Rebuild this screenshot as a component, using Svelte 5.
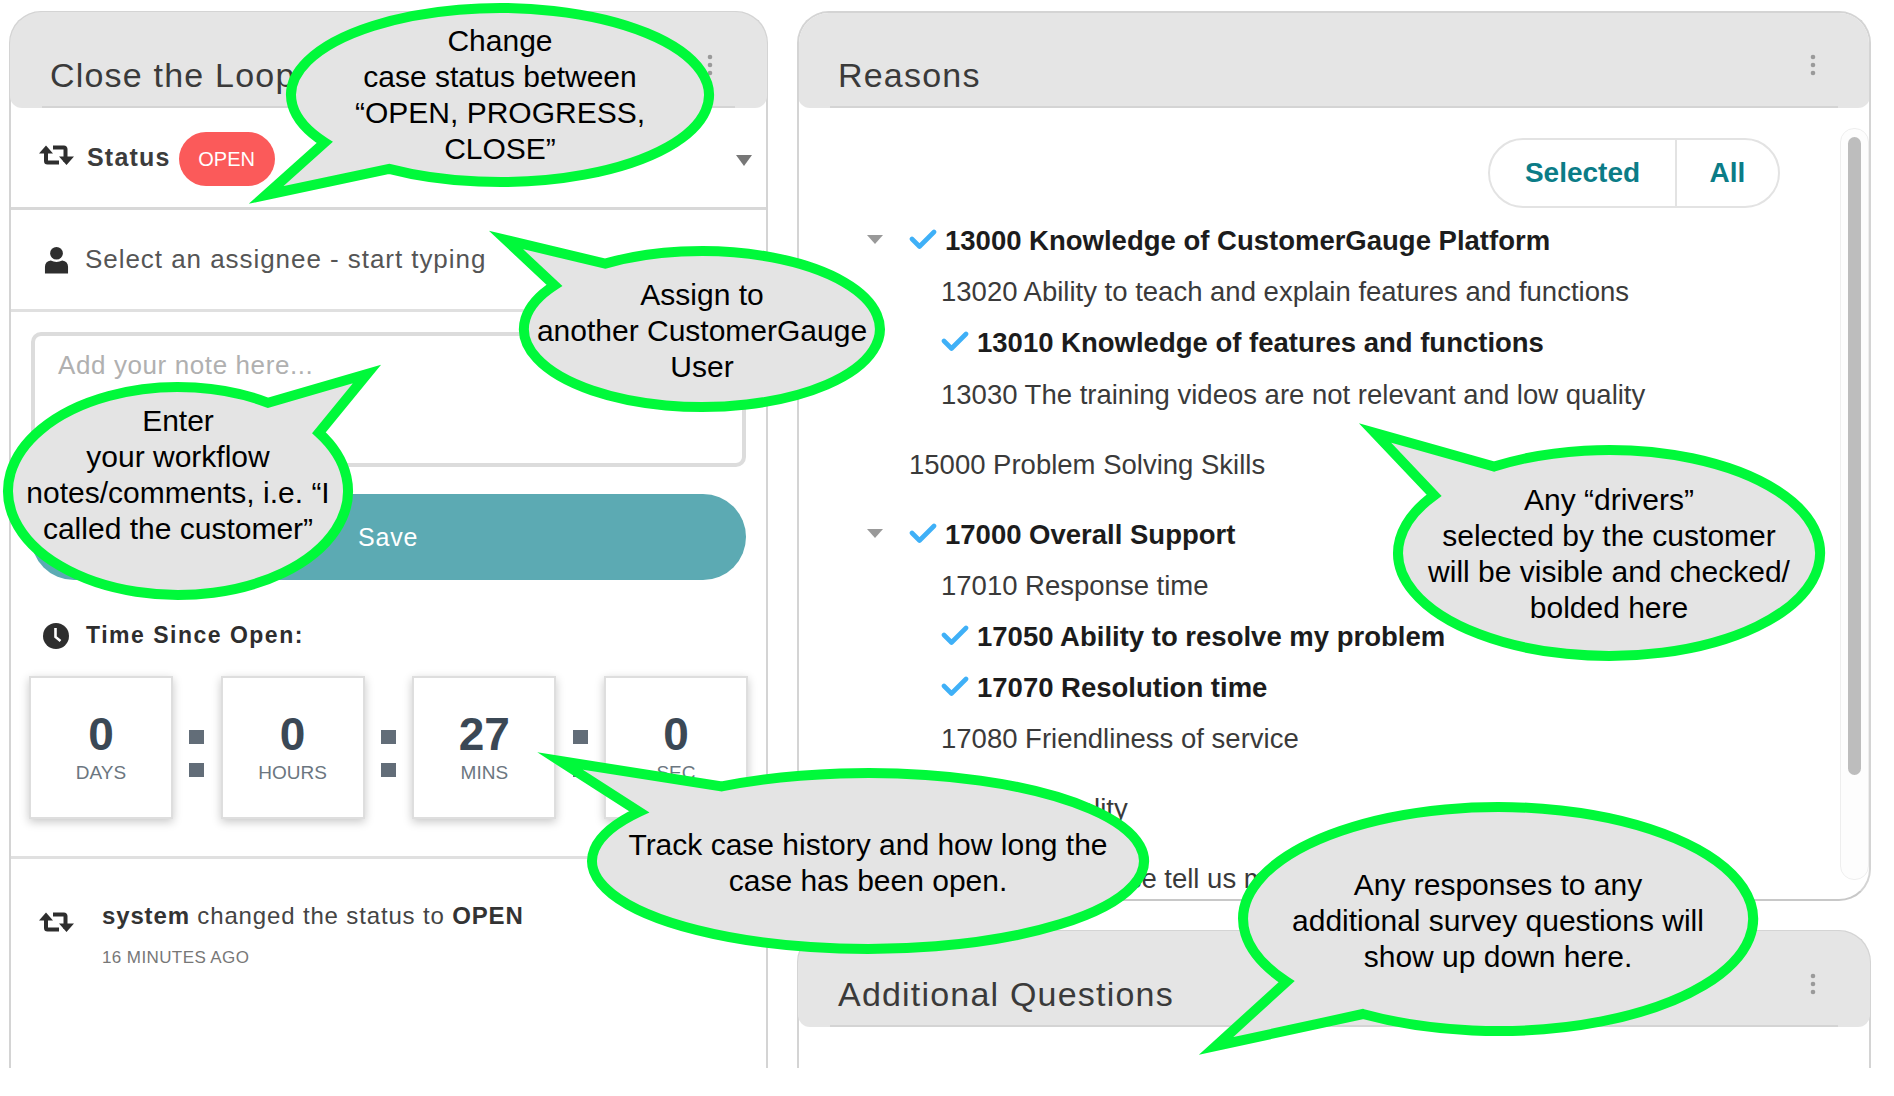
<script>
  const timers = [
    { value: 0, label: 'DAYS' },
    { value: 0, label: 'HOURS' },
    { value: 27, label: 'MINS' },
    { value: 0, label: 'SEC' }
  ];

  const reasons = [
    { text: '13000 Knowledge of CustomerGauge Platform', level: 0, on: true, open: true },
    { text: '13020 Ability to teach and explain features and functions', level: 1 },
    { text: '13010 Knowledge of features and functions', level: 1, on: true },
    { text: '13030 The training videos are not relevant and low quality', level: 1 },
    { text: '15000 Problem Solving Skills', level: 0, gap: true },
    { text: '17000 Overall Support', level: 0, on: true, open: true, gap: true },
    { text: '17010 Response time', level: 1 },
    { text: '17050 Ability to resolve my problem', level: 1, on: true },
    { text: '17070 Resolution time', level: 1, on: true },
    { text: '17080 Friendliness of service', level: 1 },
    { text: '18000 Site quality', level: 0, gap: true },
    { text: '19000 Other, please tell us more', level: 0, gap: true }
  ];

  // a1/a2 = where the tail leaves the ellipse (degrees), tip = point of the tail
  const bubbles = [
    { cx: 500, cy: 95, rx: 209, ry: 87, a1: 147, a2: 122, tip: [266, 195], y: 51,
      lines: ['Change', 'case status between', '“OPEN, PROGRESS,', 'CLOSE”'] },
    { cx: 702, cy: 329, rx: 178, ry: 78, a1: 237, a2: 214, tip: [506, 240], y: 305,
      lines: ['Assign to', 'another CustomerGauge', 'User'] },
    { cx: 178, cy: 491, rx: 170, ry: 104, a1: -58, a2: -34, tip: [367, 374], y: 431,
      lines: ['Enter', 'your workflow', 'notes/comments, i.e. “I', 'called the customer”'] },
    { cx: 868, cy: 861, rx: 276, ry: 88, a1: 238, a2: 214, tip: [560, 761], y: 855,
      lines: ['Track case history and how long the', 'case has been open.'] },
    { cx: 1609, cy: 553, rx: 211, ry: 103, a1: 237, a2: 214, tip: [1375, 433], y: 510,
      lines: ['Any “drivers”', 'selected by the customer', 'will be visible and checked/', 'bolded here'] },
    { cx: 1498, cy: 919, rx: 255, ry: 112, a1: 146, a2: 122, tip: [1216, 1046], y: 895,
      lines: ['Any responses to any', 'additional survey questions will', 'show up down here.'] }
  ];

  function point(b, deg) {
    const r = (deg * Math.PI) / 180;
    return `${(b.cx + b.rx * Math.cos(r)).toFixed(1)} ${(b.cy + b.ry * Math.sin(r)).toFixed(1)}`;
  }

  function bubblePath(b) {
    const clockwise = b.a1 > b.a2 ? 1 : 0;
    return `M${point(b, b.a1)} A${b.rx} ${b.ry} 0 1 ${clockwise} ${point(b, b.a2)} L${b.tip[0]} ${b.tip[1]} Z`;
  }
</script>

{#snippet retweet()}
  <svg class="icon retweet" viewBox="0 0 35 22" aria-hidden="true">
    <path d="M7 4 V17 a1.5 1.5 0 0 0 1.5 1.5 H20 M26.5 18 V5 a1.5 1.5 0 0 0 -1.5 -1.5 H14" fill="none" stroke="currentColor" stroke-width="4" />
    <path d="M0 9.5 L7 1.5 L14 9.5 Z M20 12.5 L27.5 21 L35 12.5 Z" fill="currentColor" />
  </svg>
{/snippet}

{#snippet dots()}
  <svg class="dots" viewBox="0 0 6 22" aria-hidden="true">
    <circle cx="3" cy="3" r="2.3" /><circle cx="3" cy="11" r="2.3" /><circle cx="3" cy="19" r="2.3" />
  </svg>
{/snippet}

{#snippet check()}
  <svg class="check" viewBox="0 0 28 22" aria-hidden="true">
    <path d="M3 11 L10.5 18.5 L25 4" fill="none" stroke="#3fb0f7" stroke-width="4.6" stroke-linejoin="round" stroke-linecap="round" />
  </svg>
{/snippet}

<div class="page">
  <section class="panel left">
    <header class="panel-head">
      <h2>Close the Loop</h2>
      {@render dots()}
    </header>

    <div class="status-row">
      {@render retweet()}
      <strong>Status</strong>
      <span class="badge">OPEN</span>
      <span class="caret"></span>
    </div>

    <div class="assignee-row">
      <svg class="icon user" viewBox="0 0 26 28" aria-hidden="true">
        <circle cx="13" cy="7" r="6.6" fill="currentColor" />
        <path d="M1 28 V21 Q1 15.5 7 14.5 Q13 17.5 19 14.5 Q25 15.5 25 21 V28 Z" fill="currentColor" />
      </svg>
      <span>Select an assignee - start typing</span>
    </div>

    <div class="note-area">
      <div class="note">Add your note here...</div>
      <button class="save">Save</button>

      <div class="since">
        <svg class="icon clock" viewBox="0 0 26 26" aria-hidden="true">
          <circle cx="13" cy="13" r="13" fill="currentColor" />
          <path d="M12.5 5 V14 L17.5 18" fill="none" stroke="#fff" stroke-width="2.6" />
        </svg>
        <strong>Time Since Open:</strong>
      </div>

      <div class="timers">
        {#each timers as t, i}
          {#if i > 0}
            <div class="colon"><i></i><i></i></div>
          {/if}
          <div class="timer">
            <b>{t.value}</b>
            <span>{t.label}</span>
          </div>
        {/each}
      </div>
    </div>

    <div class="history">
      {@render retweet()}
      <div>
        <p><b>system</b> changed the status to <b>OPEN</b></p>
        <small>16 MINUTES AGO</small>
      </div>
    </div>
  </section>

  <div class="right">
    <section class="panel reasons-panel">
      <header class="panel-head">
        <h2>Reasons</h2>
        {@render dots()}
      </header>
      <div class="reasons-body">
        <div class="scroll"><div class="thumb"></div></div>
        <div class="toggle">
          <span class="sel">Selected</span>
          <span class="all">All</span>
        </div>
        <ul>
          {#each reasons as r}
            <li class:child={r.level === 1} class:on={r.on} class:gap={r.gap}>
              {#if r.open}<span class="tree-caret"></span>{/if}
              {#if r.on}{@render check()}{/if}
              <span>{r.text}</span>
            </li>
          {/each}
        </ul>
      </div>
    </section>

    <section class="panel extra-panel">
      <header class="panel-head">
        <h2>Additional Questions</h2>
        {@render dots()}
      </header>
    </section>
  </div>

  <svg class="callouts" viewBox="0 0 1894 1096" aria-hidden="true">
    {#each bubbles as b}
      <path class="bubble" d={bubblePath(b)} />
      {#each b.lines as line, i}
        <text x={b.cx} y={b.y + i * 36}>{line}</text>
      {/each}
    {/each}
  </svg>
</div>

<style>
  :global(body) {
    background: #fff;
  }

  .page {
    position: relative;
    box-sizing: border-box;
    width: 1894px;
    height: 1068px;
    padding: 11px 23px 0 9px;
    display: flex;
    gap: 29px;
    overflow: hidden;
    font-family: "Liberation Sans", Arial, sans-serif;
    color: #333;
  }

  .panel {
    box-sizing: border-box;
    border: 2px solid #d4d4d4;
    border-bottom: none;
    border-radius: 32px 32px 0 0;
  }

  .left {
    width: 759px;
    height: 1057px;
  }

  .right {
    flex: 1;
    display: flex;
    flex-direction: column;
    gap: 29px;
  }

  .panel-head {
    box-sizing: border-box;
    position: relative;
    height: 96px;
    margin: -1px -1px 0;
    padding: 39px 37px 0 40px;
    display: flex;
    justify-content: space-between;
    background: #e5e5e5;
    border-radius: 32px 32px 12px 12px;
  }

  .panel-head::after {
    content: "";
    position: absolute;
    left: 32px;
    right: 32px;
    bottom: 0;
    height: 2px;
    background: #d4d4d4;
  }

  h2 {
    margin: 4px 0 0;
    font-size: 34px;
    font-weight: 400;
    letter-spacing: 1.2px;
    line-height: 40px;
    color: #3a3a3a;
  }

  .dots {
    width: 6px;
    height: 22px;
    margin: 3px 17px 0 0;
    fill: #9a9a9a;
  }

  .icon {
    flex: none;
    color: #2e2e2e;
  }

  .retweet {
    width: 35px;
    height: 22px;
  }

  .status-row {
    position: relative;
    box-sizing: border-box;
    height: 102px;
    padding: 0 0 0 28px;
    display: flex;
    align-items: center;
    border-bottom: 3px solid #d8d8d8;
    font-size: 25px;
  }

  .status-row .retweet {
    margin-top: -6px;
  }

  .status-row strong {
    margin: 0 8px 0 13px;
    letter-spacing: 1.2px;
    color: #3c3c3c;
  }

  .badge {
    box-sizing: border-box;
    width: 96px;
    height: 54px;
    margin-top: 2px;
    border-radius: 27px;
    background: #fb5a5a;
    color: #fff;
    font-size: 20px;
    text-align: center;
    line-height: 54px;
  }

  .caret {
    position: absolute;
    right: 14px;
    top: 47px;
    border: 8px solid transparent;
    border-top: 11px solid #777;
    border-bottom: none;
  }

  .assignee-row {
    box-sizing: border-box;
    height: 102px;
    padding: 0 0 0 33px;
    display: flex;
    align-items: center;
    gap: 16px;
    border-bottom: 3px solid #e0e0e0;
    font-size: 26px;
    letter-spacing: 0.95px;
    color: #555;
  }

  .user {
    width: 25px;
    height: 28px;
  }

  .note-area {
    padding: 20px 20px 0;
    height: 547px;
    box-sizing: border-box;
    border-bottom: 3px solid #e0e0e0;
  }

  .note {
    box-sizing: border-box;
    height: 135px;
    padding: 14px 23px;
    border: 4px solid #dcdcdc;
    border-radius: 10px;
    font-size: 26px;
    letter-spacing: 0.6px;
    color: #b0b0b0;
  }

  .save {
    display: block;
    box-sizing: border-box;
    width: 100%;
    height: 86px;
    margin-top: 27px;
    padding-left: 327px;
    border: none;
    border-radius: 43px;
    background: #5caab3;
    color: #fff;
    font: 25px "Liberation Sans", Arial, sans-serif;
    letter-spacing: 0.8px;
    text-align: left;
  }

  .since {
    display: flex;
    align-items: center;
    gap: 17px;
    margin: 42px 0 0 12px;
    font-size: 23px;
    letter-spacing: 1.5px;
    color: #2e2e2e;
  }

  .clock {
    width: 26px;
    height: 26px;
  }

  .timers {
    display: flex;
    margin: 27px 0 0 -2px;
    justify-content: space-between;
    width: 719px;
  }

  .timer {
    box-sizing: border-box;
    width: 144px;
    height: 143px;
    padding-top: 33px;
    border: 2px solid #dedede;
    box-shadow: 0 3px 9px rgba(0, 0, 0, 0.22);
    background: #fff;
    text-align: center;
    display: flex;
    flex-direction: column;
    align-items: center;
  }

  .timer b {
    font-size: 46px;
    line-height: 46px;
    color: #3b4855;
  }

  .timer span {
    margin-top: 5px;
    font-size: 19px;
    color: #6b7680;
  }

  .colon {
    width: 15px;
    padding-top: 54px;
    display: flex;
    flex-direction: column;
    gap: 19px;
  }

  .colon i {
    display: block;
    height: 14px;
    background: #626d78;
  }

  .history {
    padding: 42px 0 0 28px;
    display: flex;
    gap: 28px;
    font-size: 24px;
    letter-spacing: 0.85px;
    color: #444;
  }

  .history .retweet {
    margin-top: 10px;
  }

  .history p {
    margin: 0;
    line-height: 30px;
  }

  .history b {
    color: #333;
  }

  .history small {
    display: block;
    margin-top: 17px;
    font-size: 17px;
    letter-spacing: 0.4px;
    color: #777;
  }

  .reasons-panel {
    height: 890px;
    border-bottom: 2px solid #c8c8c8;
    border-radius: 32px;
    overflow: hidden;
  }

  .extra-panel {
    flex: 1;
  }

  .reasons-body {
    position: relative;
    height: 792px;
    overflow: hidden;
  }

  .scroll {
    position: absolute;
    top: 20px;
    right: 0;
    width: 29px;
    height: 752px;
    box-sizing: border-box;
    padding: 8px 7px;
    border: 1px solid #eee;
    border-radius: 14px;
    background: #fdfdfd;
  }

  .thumb {
    height: 638px;
    border-radius: 7px;
    background: #bdbdbd;
  }

  .toggle {
    position: absolute;
    top: 30px;
    left: 689px;
    width: 292px;
    height: 70px;
    box-sizing: border-box;
    display: flex;
    border: 2px solid #e3e3e3;
    border-radius: 35px;
    font-size: 28px;
    font-weight: 700;
    color: #0b7c87;
    line-height: 66px;
    text-align: center;
  }

  .sel {
    width: 185px;
    border-right: 2px solid #e3e3e3;
  }

  .all {
    flex: 1;
  }

  ul {
    list-style: none;
    margin: 0;
    padding: 116px 0 0 110px;
  }

  li {
    position: relative;
    display: flex;
    align-items: center;
    gap: 8px;
    height: 34px;
    margin-bottom: 17.2px;
    font-size: 27.5px;
    color: #3a3a3a;
    white-space: nowrap;
  }

  li.on {
    font-weight: 700;
    color: #1c1c1c;
  }

  li.child {
    padding-left: 32px;
  }

  li.gap {
    margin-top: 36px;
  }

  .check {
    width: 28px;
    height: 22px;
    flex: none;
    margin-top: -4px;
  }

  .tree-caret {
    position: absolute;
    left: -42px;
    top: 11px;
    border: 8px solid transparent;
    border-top: 9px solid #999;
    border-bottom: none;
  }

  .callouts {
    position: absolute;
    left: 0;
    top: 0;
    width: 1894px;
    height: 1096px;
    pointer-events: none;
  }

  .bubble {
    fill: #e4e4e4;
    stroke: #00f93a;
    stroke-width: 10;
    stroke-linejoin: miter;
    stroke-miterlimit: 12;
  }

  text {
    font-size: 30px;
    fill: #000;
    text-anchor: middle;
  }
</style>
